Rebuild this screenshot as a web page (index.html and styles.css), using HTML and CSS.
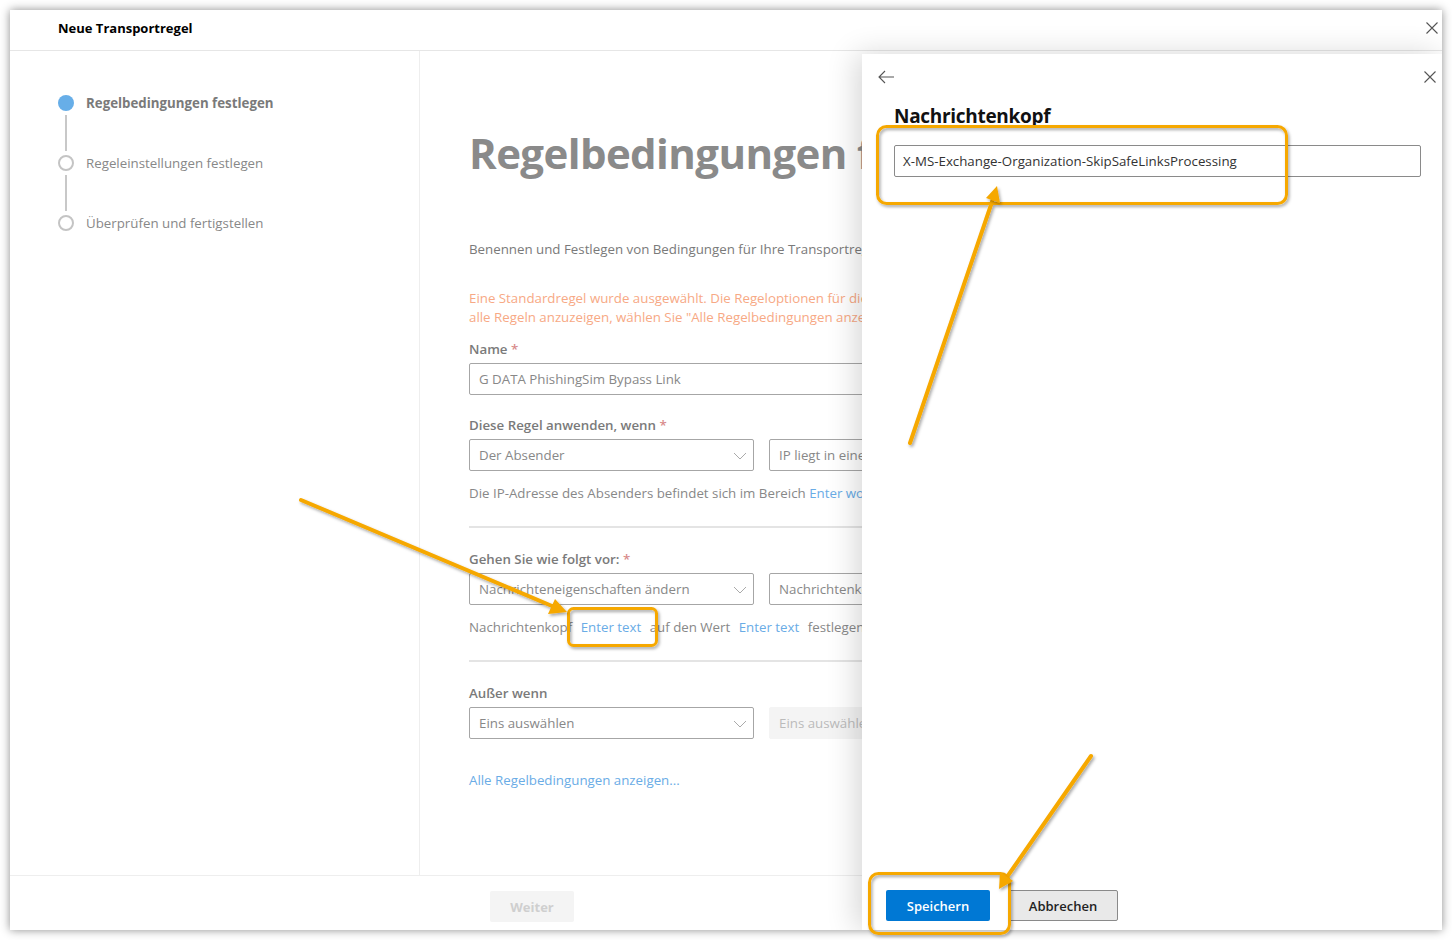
FILE: index.html
```html
<!DOCTYPE html>
<html lang="de">

<head>
    <meta charset="UTF-8">
    <meta name="viewport" content="width=device-width, initial-scale=1.0">
    <title>Neue Transportregel</title>
    <link rel="stylesheet" href="styles.css">
</head>

<body>
    <div class="window">
        <div class="win-header">
            <span class="win-title">Neue Transportregel</span>
            <button class="icon-btn win-close" aria-label="Schließen">
                <svg width="12" height="12" viewBox="0 0 12 12"><path d="M0.5 0.5L11.5 11.5M11.5 0.5L0.5 11.5" stroke="#555" stroke-width="1.1" fill="none"/></svg>
            </button>
        </div>

        <div class="win-body">
            <nav class="steps">
                <div class="step current"><span class="dot"></span><span>Regelbedingungen festlegen</span></div>
                <div class="step-line"></div>
                <div class="step"><span class="dot"></span><span>Regeleinstellungen festlegen</span></div>
                <div class="step-line"></div>
                <div class="step"><span class="dot"></span><span>Überprüfen und fertigstellen</span></div>
            </nav>

            <main class="content">
                <h1>Regelbedingungen festlegen</h1>
                <p class="intro">Benennen und Festlegen von Bedingungen für Ihre Transportregel</p>
                <p class="notice">
                    <span>Eine Standardregel wurde ausgewählt. Die Regeloptionen für diese Vorlage sind eingeschränkt. Um</span>
                    <span>alle Regeln anzuzeigen, wählen Sie "Alle Regelbedingungen anzeigen..." aus.</span>
                </p>

                <label class="field-label">Name <span class="req">*</span></label>
                <div class="text-input">G DATA PhishingSim Bypass Link</div>

                <label class="field-label gap-top">Diese Regel anwenden, wenn <span class="req">*</span></label>
                <div class="select-row">
                    <div class="select">Der Absender <svg class="chev" width="14" height="8" viewBox="0 0 14 8"><path d="M1 1L7 7L13 1" stroke="#aaa" fill="none"/></svg></div>
                    <div class="select">IP liegt in einem dieser Bereiche oder stimmt genau überein</div>
                </div>
                <p class="hint">Die IP-Adresse des Absenders befindet sich im Bereich <a href="#">Enter words</a></p>

                <hr class="divider">

                <label class="field-label">Gehen Sie wie folgt vor: <span class="req">*</span></label>
                <div class="select-row">
                    <div class="select">Nachrichteneigenschaften ändern <svg class="chev" width="14" height="8" viewBox="0 0 14 8"><path d="M1 1L7 7L13 1" stroke="#aaa" fill="none"/></svg></div>
                    <div class="select">Nachrichtenkopf festlegen</div>
                </div>
                <p class="hint">Nachrichtenkopf <a href="#" class="inline-link">Enter text</a> auf den Wert <a href="#" class="inline-link">Enter text</a> festlegen</p>

                <hr class="divider">

                <label class="field-label">Außer wenn</label>
                <div class="select-row">
                    <div class="select">Eins auswählen <svg class="chev" width="14" height="8" viewBox="0 0 14 8"><path d="M1 1L7 7L13 1" stroke="#aaa" fill="none"/></svg></div>
                    <div class="select disabled">Eins auswählen</div>
                </div>

                <a href="#" class="all-link">Alle Regelbedingungen anzeigen...</a>
            </main>
        </div>

        <div class="win-footer">
            <button class="btn-next" disabled>Weiter</button>
        </div>

        <aside class="flyout">
            <div class="flyout-top">
                <button class="icon-btn" aria-label="Zurück">
                    <svg width="17" height="14" viewBox="0 0 17 14"><path d="M16 7H1M7 1L1 7L7 13" stroke="#555" stroke-width="1.1" fill="none"/></svg>
                </button>
                <button class="icon-btn" aria-label="Schließen">
                    <svg width="12" height="12" viewBox="0 0 12 12"><path d="M0.5 0.5L11.5 11.5M11.5 0.5L0.5 11.5" stroke="#555" stroke-width="1.1" fill="none"/></svg>
                </button>
            </div>
            <h2>Nachrichtenkopf</h2>
            <div class="flyout-input">X-MS-Exchange-Organization-SkipSafeLinksProcessing</div>
            <div class="flyout-actions">
                <button class="btn-primary">Speichern</button>
                <button class="btn-default">Abbrechen</button>
            </div>
        </aside>
    </div>

    <!-- Markierungen aus dem Screenshot -->
    <svg class="marks" width="1452" height="940" viewBox="0 0 1452 940">
        <defs>
            <filter id="shade" x="-20%" y="-20%" width="140%" height="140%">
                <feDropShadow dx="1.5" dy="2" stdDeviation="1.5" flood-color="#000" flood-opacity="0.35"/>
            </filter>
        </defs>
        <g filter="url(#shade)" stroke="#f6a800" fill="none" stroke-linecap="round">
            <rect x="877.5" y="126.5" width="409" height="77" rx="9" stroke-width="3"/>
            <rect x="568.5" y="608.5" width="88" height="37" rx="5" stroke-width="3"/>
            <rect x="869.5" y="873.5" width="140" height="60" rx="9" stroke-width="3"/>
            <line x1="301" y1="500" x2="552" y2="606" stroke-width="4"/>
            <line x1="910" y1="443" x2="993" y2="199" stroke-width="4"/>
            <line x1="1091" y1="756" x2="1007" y2="877" stroke-width="4"/>
        </g>
        <g filter="url(#shade)" fill="#f6a800">
            <polygon points="567,612 548,614 555,599"/>
            <polygon points="997,186 1000,203 986,198"/>
            <polygon points="999,889 1000,872 1013,881"/>
        </g>
    </svg>
</body>

</html>
```

FILE: styles.css
```css
body {
    margin: 0;
    padding: 10px;
    background: #fff;
    font-family: "Open Sans", "Noto Sans", Arial, sans-serif;
    font-size: 13.3px;
    color: #333;
    position: relative;
    width: 1432px;
    height: 920px;
    overflow: hidden;
}

.window {
    position: relative;
    width: 1432px;
    height: 920px;
    background: #fff;
    box-shadow: 0 0 9px rgba(0, 0, 0, 0.45);
    display: flex;
    flex-direction: column;
    overflow: hidden;
}

.icon-btn {
    border: none;
    background: none;
    padding: 0;
    cursor: pointer;
    display: flex;
    align-items: center;
    justify-content: center;
}

.win-header {
    height: 41px;
    border-bottom: 1px solid #e6e6e6;
    display: flex;
    align-items: center;
    justify-content: space-between;
    padding: 0 4px 4px 48px;
    box-sizing: border-box;
    flex-shrink: 0;
}

.win-title {
    font-weight: 700;
    font-size: 13px;
    color: #000;
}

/* body */
.win-body {
    flex: 1;
    display: flex;
    min-height: 0;
}

.steps {
    width: 361px;
    border-right: 1px solid #eee;
    padding: 44px 0 0 48px;
    flex-shrink: 0;
}

.step {
    display: flex;
    align-items: center;
    gap: 12px;
    height: 16px;
    color: #888;
}

.step .dot {
    width: 12px;
    height: 12px;
    border-radius: 50%;
    border: 2px solid #c4c4c4;
    background: #fff;
}

.step.current {
    font-weight: 700;
    color: #7a7a7a;
}

.step.current .dot {
    width: 16px;
    height: 16px;
    border: none;
    background: #67aee8;
}

.step-line {
    width: 2px;
    height: 36px;
    margin: 4px 0 4px 7px;
    background: #c8c8c8;
}

.content {
    flex: 1;
    padding: 74px 0 0 49px;
    white-space: nowrap;
    color: #888;
}

.content h1 {
    margin: 0;
    font-size: 42px;
    line-height: 56px;
    font-weight: 700;
    letter-spacing: -0.6px;
    color: #8a8a8a;
}

.intro {
    margin: 59px 0 0;
    line-height: 19px;
    color: #7a7a7a;
}

.notice {
    margin: 30px 0 0;
    line-height: 19px;
    color: #f7a985;
}

.notice span {
    display: block;
}

.field-label {
    display: block;
    margin-top: 13px;
    margin-bottom: 4px;
    line-height: 19px;
    font-weight: 600;
    color: #7a7a7a;
}

.field-label.gap-top {
    margin-top: 21px;
}

.req {
    color: #d88a8a;
}

.text-input,
.select {
    box-sizing: border-box;
    height: 32px;
    border: 1px solid #a6a6a6;
    border-radius: 2px;
    padding: 0 9px;
    line-height: 30px;
    color: #888;
    background: #fff;
}

.text-input {
    width: 800px;
}

.select-row {
    display: flex;
    gap: 15px;
}

.select {
    width: 285px;
    position: relative;
    flex-shrink: 0;
}

.select .chev {
    position: absolute;
    right: 6px;
    top: 12px;
}

.select.disabled {
    border-color: #f4f4f4;
    background: #f4f4f4;
    color: #bbb;
}

.hint {
    margin: 13px 0 0;
    line-height: 19px;
    color: #888;
}

.hint a,
.all-link {
    color: #6aace6;
    text-decoration: none;
}

.inline-link {
    margin: 0 5px;
}

.divider {
    width: 800px;
    margin: 23px 0 0;
    border: none;
    border-top: 2px solid #e4e4e4;
}

.divider + .field-label {
    margin-top: 22px;
}

.all-link {
    display: block;
    margin-top: 32px;
    line-height: 19px;
}

.win-footer {
    height: 55px;
    border-top: 1px solid #eee;
    padding: 15px 0 0 480px;
    box-sizing: border-box;
    flex-shrink: 0;
}

.btn-next {
    width: 84px;
    height: 31px;
    border: none;
    border-radius: 2px;
    background: #f4f4f4;
    color: #cfcfcf;
    font-family: inherit;
    font-size: 13px;
    font-weight: 700;
}

/* flyout panel */
.flyout {
    position: absolute;
    left: 852px;
    top: 44px;
    right: 0;
    bottom: 0;
    background: #fff;
    box-shadow: -6px 0 28px rgba(0, 0, 0, 0.16);
    display: flex;
    flex-direction: column;
    padding: 16px 0 9px 0;
    box-sizing: border-box;
}

.flyout-top {
    display: flex;
    justify-content: space-between;
    align-items: center;
    padding: 0 6px 0 16px;
    height: 14px;
}

.flyout h2 {
    margin: 22px 0 0 32px;
    font-size: 19px;
    line-height: 20px;
    font-weight: 700;
    color: #111;
    letter-spacing: -0.3px;
}

.flyout-input {
    box-sizing: border-box;
    margin: 19px 21px 0 32px;
    height: 32px;
    border: 1px solid #8a8a8a;
    border-radius: 2px;
    padding: 0 8px;
    line-height: 30px;
    color: #333;
}

.flyout-actions {
    margin-top: auto;
    display: flex;
    gap: 18px;
    padding-left: 24px;
}

.btn-primary,
.btn-default {
    height: 31px;
    border-radius: 2px;
    font-family: inherit;
    font-size: 13px;
    font-weight: 600;
    cursor: pointer;
}

.btn-primary {
    width: 104px;
    border: none;
    background: #0078d4;
    color: #fff;
}

.btn-default {
    width: 110px;
    border: 1px solid #8a8a8a;
    background: #e9e9e9;
    color: #222;
}

.marks {
    position: absolute;
    left: 0;
    top: 0;
    pointer-events: none;
}
```
